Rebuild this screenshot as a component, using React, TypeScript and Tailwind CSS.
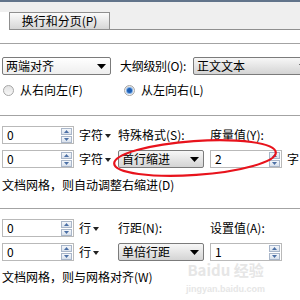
import React from 'react';

const font = "font-['SimSun','Noto_Sans_CJK_SC',sans-serif]";

const Arrow = () => (
    <svg width="9" height="5" viewBox="0 0 9 5" className="shrink-0">
        <path d="M0 0 H9 L4.5 5 Z" fill="#000" />
    </svg>
);

const SmallArrow = () => (
    <svg width="6" height="4" viewBox="0 0 6 4" className="ml-[2px] mt-[2px]">
        <path d="M0 0 H6 L3 4 Z" fill="#222" />
    </svg>
);

const SpinBtn = ({ up }: { up?: boolean }) => (
    <div className="w-[11px] h-[7px] border border-[#a9b6c9] bg-gradient-to-b from-[#f4f7fb] to-[#d9e1ec] flex items-center justify-center">
        <svg width="5" height="3" viewBox="0 0 5 3">
            <path d={up ? 'M0 3 H5 L2.5 0 Z' : 'M0 0 H5 L2.5 3 Z'} fill="#4b6fa5" />
        </svg>
    </div>
);

const Spinner = ({ value }: { value: string }) => (
    <div className="w-[72px] h-[18px] shrink-0 border border-[#b9b9b9] bg-white flex items-center justify-between pl-[4px] pr-[1px]">
        <span>{value}</span>
        <div className="flex flex-col gap-[1px]">
            <SpinBtn up />
            <SpinBtn />
        </div>
    </div>
);

const Dropdown = ({ label, width, flat }: { label: string; width: string; flat?: boolean }) => (
    <div
        className={`${width} h-[18px] shrink-0 border border-[#7b7b7b] rounded-[2px] flex items-center justify-between pl-[3px] pr-[4px] ${
            flat ? 'bg-gradient-to-b from-[#ffffff] to-[#eeeeee]' : 'bg-gradient-to-b from-[#f7f7f7] to-[#d4d4d4]'
        }`}
    >
        <span className="whitespace-nowrap">{label}</span>
        <Arrow />
    </div>
);

const Radio = ({ checked }: { checked?: boolean }) => (
    <div className="w-[11px] h-[11px] shrink-0 rounded-full border border-[#a6a6a6] bg-gradient-to-b from-[#e2e2e2] to-[#f8f8f8] flex items-center justify-center">
        {checked && <div className="w-[5px] h-[5px] rounded-full bg-[#1f5fb4] ring-1 ring-[#7fb0e8]" />}
    </div>
);

const Unit = ({ text }: { text: string }) => (
    <div className="w-[40px] shrink-0 pl-[5px] flex items-center">
        <span>{text}</span>
        <SmallArrow />
    </div>
);

export default function App() {
    return (
        <div className={`w-[300px] h-[300px] bg-white overflow-hidden relative text-[12px] leading-none text-black whitespace-nowrap ${font}`}>
            {/* title bar edge */}
            <div className="h-[2px] bg-[#62748b]" />

            {/* tab strip */}
            <div className="h-[28px] bg-[#efefef] flex items-end">
                <div className="w-[10px] h-[18px] bg-white border-r border-[#8f8f8f]" />
                <div className="w-[100px] h-[18px] border-t border-r border-b border-[#8f8f8f] bg-gradient-to-b from-[#fbfbfb] to-[#d6d6d6] flex items-center justify-center">
                    换行和分页(P)
                </div>
                <div className="flex-1 h-px bg-[#8f8f8f]" />
            </div>

            <div className="mt-[13px] h-px bg-[#a3a3a3]" />

            {/* alignment / outline level */}
            <div className="mt-[13px] flex items-center pl-[2px]">
                <Dropdown label="两端对齐" width="w-[109px]" flat />
                <span className="ml-[9px] w-[73px] shrink-0 tracking-[-0.3px]">大纲级别(O):</span>
                <Dropdown label="正文文本" width="w-[120px]" />
            </div>

            {/* direction */}
            <div className="mt-[8px] h-[14px] flex items-center pl-[3px]">
                <Radio />
                <span className="ml-[6px] w-[104px] shrink-0">从右向左(F)</span>
                <Radio checked />
                <span className="ml-[6px]">从左向右(L)</span>
            </div>

            <div className="mt-[18px] h-px bg-[#a3a3a3]" />

            {/* indent */}
            <div className="mt-[10px] flex items-center pl-[2px] h-[18px]">
                <Spinner value="0" />
                <Unit text="字符" />
                <span className="ml-[4px] w-[92px] shrink-0">特殊格式(S):</span>
                <span>度量值(Y):</span>
            </div>
            <div className="mt-[6px] flex items-center pl-[2px] h-[18px]">
                <Spinner value="0" />
                <Unit text="字符" />
                <div className="ml-[4px]">
                    <Dropdown label="首行缩进" width="w-[86px]" />
                </div>
                <div className="ml-[6px]">
                    <Spinner value="2" />
                </div>
                <span className="ml-[5px]">字</span>
            </div>
            <div className="mt-[10px] pl-[2px] h-[14px] flex items-center">文档网格，则自动调整右缩进(D)</div>

            <div className="mt-[16px] h-px bg-[#a3a3a3]" />

            {/* spacing */}
            <div className="mt-[10px] flex items-center pl-[2px] h-[18px]">
                <Spinner value="0" />
                <Unit text="行" />
                <span className="ml-[4px] w-[92px] shrink-0">行距(N):</span>
                <span>设置值(A):</span>
            </div>
            <div className="mt-[6px] flex items-center pl-[2px] h-[18px]">
                <Spinner value="0" />
                <Unit text="行" />
                <div className="ml-[4px]">
                    <Dropdown label="单倍行距" width="w-[86px]" />
                </div>
                <div className="ml-[6px]">
                    <Spinner value="1" />
                </div>
            </div>
            <div className="mt-[9px] pl-[2px] h-[14px] flex items-center">文档网格，则与网格对齐(W)</div>

            <div className="mt-[18px] h-px bg-[#a3a3a3]" />

            {/* watermark */}
            <div className="absolute left-[186px] top-[262px] flex flex-col items-center text-[#e6e6e6] font-['Noto_Sans_CJK_SC',sans-serif] font-bold">
                <span className="text-[15px] leading-none">Baidu 经验</span>
                <span className="text-[9px] leading-none mt-[8px] font-['Liberation_Sans',sans-serif]">jingyan.baidu.com</span>
            </div>

            {/* red annotation */}
            <svg className="absolute left-0 top-0 pointer-events-none" width="300" height="300" viewBox="0 0 300 300">
                <ellipse cx="195" cy="158" rx="81" ry="17" transform="rotate(-4 195 158)" fill="none" stroke="#e8131c" strokeWidth="2.2" />
            </svg>
        </div>
    );
}
